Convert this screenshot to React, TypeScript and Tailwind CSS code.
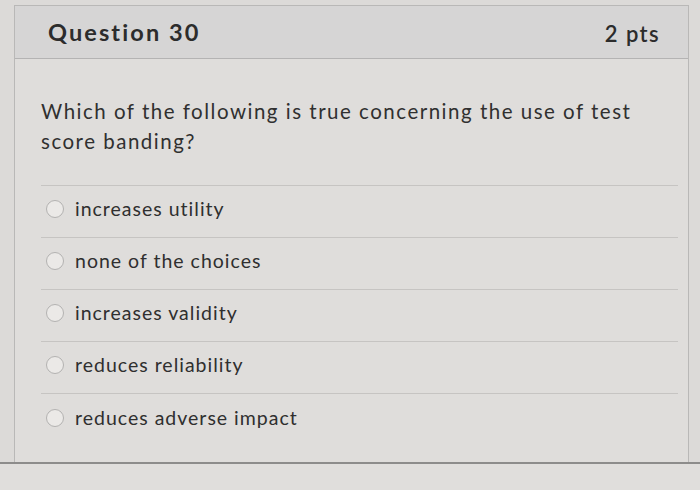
import React from "react";

const options = [
  "increases utility",
  "none of the choices",
  "increases validity",
  "reduces reliability",
  "reduces adverse impact",
];

export default function App() {
  return (
    <div
      className="w-[700px] h-[490px] overflow-hidden bg-[#dcdad8] text-[#2f2f2f]"
      style={{ fontFamily: "Lato, 'Open Sans', sans-serif" }}
    >
      <div className="pt-[5px] pl-[14px] pr-[11px]">
        <div className="border-l border-t border-r border-[#b9b8b7] bg-[#dfdddb]">
          <div className="h-[53px] bg-[#d6d5d5] border-b border-[#b4b3b3] flex items-center justify-between pl-[33px] pr-[28px]">
            <span className="text-[23.5px] font-bold text-[#2c2c2c] tracking-[2.1px] pt-[1px]">Question 30</span>
            <span className="text-[22px] font-semibold text-[#2c2c2c] tracking-[1.4px] pt-[3px]">2 pts</span>
          </div>
          <div className="h-[403px] pl-[26px] pr-[10px] pt-[37px]">
            <p className="text-[20.5px] leading-[30px] text-[#303030] tracking-[1.5px] w-[620px]">
              Which of the following is true concerning the use of test score banding?
            </p>
            <div className="mt-[29px] border-t border-[#c6c4c2]">
              {options.map((o, i) => (
                <div
                  key={o}
                  className={
                    "h-[52px] flex items-center gap-[11px] pl-[5px] pb-[5px] " +
                    (i < options.length - 1 ? "border-b border-[#c6c4c2]" : "")
                  }
                >
                  <span className="w-[18px] h-[18px] rounded-full border border-[#b3b2b1] bg-[#ebe9e7] shrink-0" />
                  <span className="text-[19.5px] tracking-[1px] text-[#2f2f2f]">{o}</span>
                </div>
              ))}
            </div>
          </div>
        </div>
      </div>
      <div className="border-t-2 border-[#8d8c8b] bg-[#e0dedc] h-[40px]" />
    </div>
  );
}
